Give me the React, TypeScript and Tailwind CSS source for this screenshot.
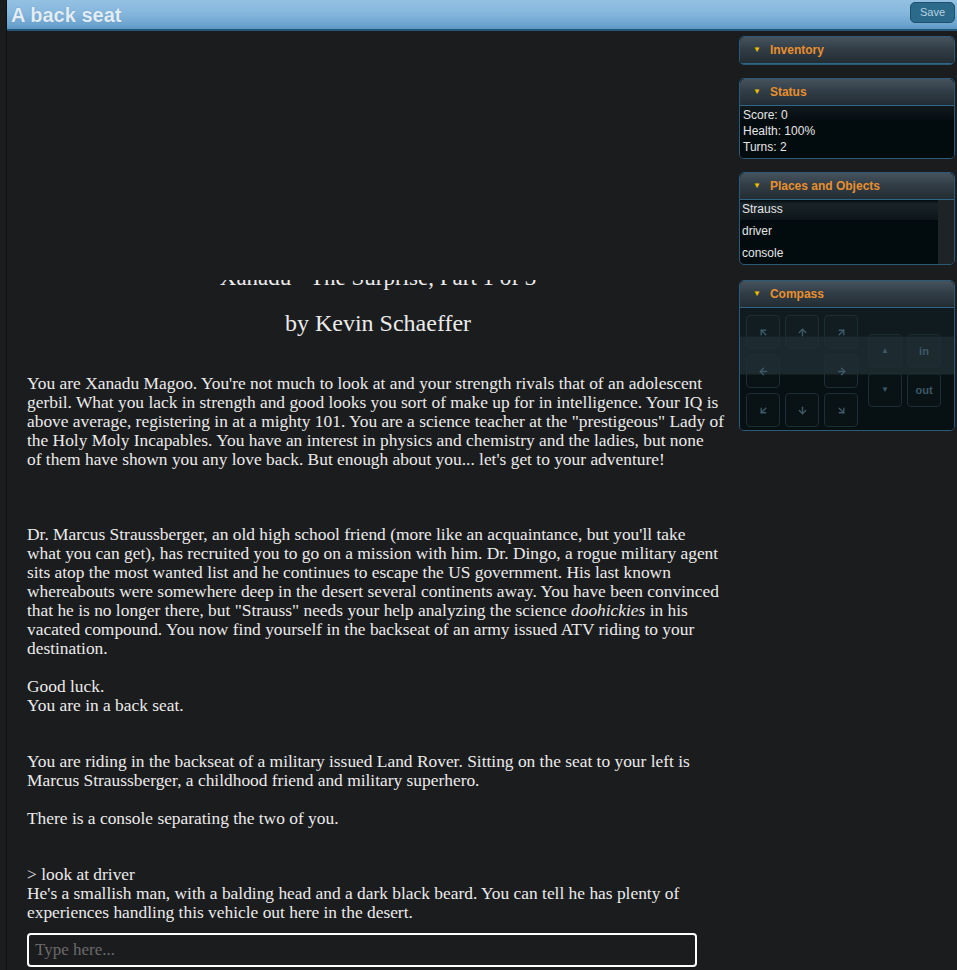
import { ArrowUpLeft, ArrowUp, ArrowUpRight, ArrowLeft, ArrowRight, ArrowDownLeft, ArrowDown, ArrowDownRight } from "lucide-react";

const serif = "font-['Liberation_Serif',Georgia,serif]";
const sans = "font-['Liberation_Sans',Arial,sans-serif]";

const PanelHeader = ({ title }: { title: string }) => (
  <div className="h-[27px] flex items-center pl-[13px] bg-[linear-gradient(180deg,#46535d_0%,#323e47_45%,#222c33_100%)] border-b border-[#2e6688] rounded-t-[5px]">
    <span className="text-[#f0c000] text-[8px] mr-[9px] leading-none">▼</span>
    <span className="text-[#e88f2e] text-[12px] font-bold">{title}</span>
  </div>
);

const CompassBtn = ({ children }: { children?: React.ReactNode }) => (
  <div className="w-[34px] h-[34px] rounded-[4px] border border-[#1d2d34] flex items-center justify-center text-[#3d5967] bg-[#ffffff03]">
    {children}
  </div>
);

export default function App() {
  const a = { size: 11, strokeWidth: 3 };
  return (
    <div className={`w-[957px] h-[970px] overflow-hidden bg-[#1b1c1e] flex ${sans}`}>
      <div className="w-[7px] shrink-0 bg-[#1b1c1e] border-r border-[#0f1011]" />
      <div className="flex-1 flex flex-col">
        <div className="h-[31px] shrink-0 flex items-center justify-between pl-[4px] pr-[2px] bg-[linear-gradient(180deg,#94c1e3_0%,#83b5dc_50%,#6ca3cf_85%,#5f97c4_100%)] border-b-2 border-[#24557a]">
          <span className="text-[#e2edf5] text-[20px] font-bold leading-none [text-shadow:0_0_1px_#5a88ad]">A back seat</span>
          <button className="h-[21px] px-[9px] mb-[4px] rounded-[5px] bg-[#2c6a8b] border border-[#1e4f6b] text-[#b9d3e2] text-[11px] leading-none">Save</button>
        </div>
        <div className="flex flex-1">
          <div className={`w-[732px] shrink-0 pl-[20px] pr-[2px] pt-[249px] text-[#ebebeb] text-[17.4px] leading-[19px] ${serif}`}>
            <div className="h-[12px] overflow-hidden pr-[8px]">
              <div className="-mt-[16px] text-center text-[23px] leading-[28px]">Xanadu - The Surprise, Part 1 of 3</div>
            </div>
            <div className="mt-[17px] pr-[8px] text-center text-[24px] leading-[28px]">by Kevin Schaeffer</div>
            <p className="mt-[37px]">
              You are Xanadu Magoo. You're not much to look at and your strength rivals that of an adolescent<br />
              gerbil. What you lack in strength and good looks you sort of make up for in intelligence. Your IQ is<br />
              above average, registering in at a mighty 101. You are a science teacher at the "prestigeous" Lady of<br />
              the Holy Moly Incapables. You have an interest in physics and chemistry and the ladies, but none<br />
              of them have shown you any love back. But enough about you... let's get to your adventure!
            </p>
            <p className="mt-[56px]">
              Dr. Marcus Straussberger, an old high school friend (more like an acquaintance, but you'll take<br />
              what you can get), has recruited you to go on a mission with him. Dr. Dingo, a rogue military agent<br />
              sits atop the most wanted list and he continues to escape the US government. His last known<br />
              whereabouts were somewhere deep in the desert several continents away. You have been convinced<br />
              that he is no longer there, but "Strauss" needs your help analyzing the science <i>doohickies</i> in his<br />
              vacated compound. You now find yourself in the backseat of an army issued ATV riding to your<br />
              destination.
            </p>
            <p className="mt-[19px]">Good luck.<br />You are in a back seat.</p>
            <p className="mt-[37px]">
              You are riding in the backseat of a military issued Land Rover. Sitting on the seat to your left is<br />
              Marcus Straussberger, a childhood friend and military superhero.
            </p>
            <p className="mt-[19px]">There is a console separating the two of you.</p>
            <p className="mt-[37px]">&gt; look at driver</p>
            <p>
              He's a smallish man, with a balding head and a dark black beard. You can tell he has plenty of<br />
              experiences handling this vehicle out here in the desert.
            </p>
            <input
              placeholder="Type here..."
              className={`mt-[11px] w-[670px] h-[34px] rounded-[4px] border-2 border-white bg-[#1b1c1e] px-[6px] text-[17px] text-[#ddd] placeholder:text-[#6a6a6a] outline-none ${serif}`}
            />
          </div>
          <div className="w-[216px] shrink-0 pt-[5px] flex flex-col gap-[13px]">
            <div className="rounded-[5px] border border-[#2a5a78] overflow-hidden">
              <PanelHeader title="Inventory" />
            </div>
            <div className="rounded-[5px] border border-[#2a5a78] overflow-hidden bg-[#020c0f]">
              <PanelHeader title="Status" />
              <div className="px-[3px] pt-[1px] pb-[3px] text-[12px] leading-[16px] text-[#e6e6e6] bg-[linear-gradient(180deg,#12191d_0%,#020c0f_30%)]">
                <div>Score: 0</div>
                <div>Health: 100%</div>
                <div>Turns: 2</div>
              </div>
            </div>
            <div className="rounded-[5px] border border-[#2a5a78] overflow-hidden bg-[#020c0f]">
              <PanelHeader title="Places and Objects" />
              <div className="flex">
                <div className="flex-1 text-[12px] text-[#e6e6e6]">
                  <div className="h-[20px] leading-[18px] pl-[2px] bg-[linear-gradient(180deg,#020c0f_0%,#1a2428_20%,#0d1519_100%)]">Strauss</div>
                  <div className="h-[22px] leading-[22px] pl-[2px]">driver</div>
                  <div className="h-[22px] leading-[22px] pl-[2px]">console</div>
                </div>
                <div className="w-[16px] bg-[#1e2326]" />
              </div>
            </div>
            <div className="mt-[2px] rounded-[5px] border border-[#2a5a78] overflow-hidden">
              <PanelHeader title="Compass" />
              <div className="h-[122px] flex gap-[10px] pl-[6px] pt-[7px] bg-[linear-gradient(180deg,#101b20_0%,#101b20_23%,#1b282d_24%,#1b282d_54%,#071114_55%,#071114_100%)]">
                <div className="grid grid-cols-3 gap-[5px] h-fit">
                  <CompassBtn><ArrowUpLeft {...a} /></CompassBtn>
                  <CompassBtn><ArrowUp {...a} /></CompassBtn>
                  <CompassBtn><ArrowUpRight {...a} /></CompassBtn>
                  <CompassBtn><ArrowLeft {...a} /></CompassBtn>
                  <div className="w-[34px] h-[34px]" />
                  <CompassBtn><ArrowRight {...a} /></CompassBtn>
                  <CompassBtn><ArrowDownLeft {...a} /></CompassBtn>
                  <CompassBtn><ArrowDown {...a} /></CompassBtn>
                  <CompassBtn><ArrowDownRight {...a} /></CompassBtn>
                </div>
                <div className="grid grid-cols-2 gap-[5px] h-fit mt-[19px]">
                  <CompassBtn><span className="text-[8px]">▲</span></CompassBtn>
                  <CompassBtn><span className="text-[11px] font-bold">in</span></CompassBtn>
                  <CompassBtn><span className="text-[8px]">▼</span></CompassBtn>
                  <CompassBtn><span className="text-[11px] font-bold">out</span></CompassBtn>
                </div>
              </div>
            </div>
          </div>
        </div>
      </div>
    </div>
  );
}
